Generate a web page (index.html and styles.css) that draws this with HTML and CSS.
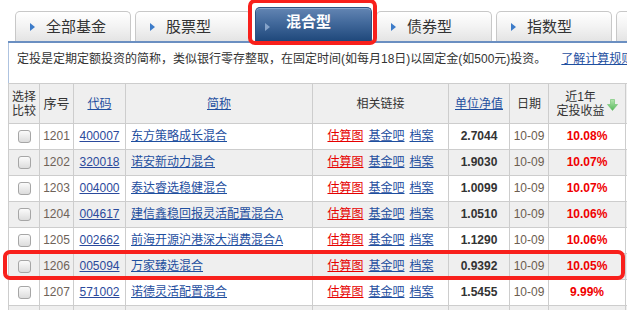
FILE: index.html
```html
<!DOCTYPE html>
<html lang="zh-CN">
<head>
<meta charset="utf-8">
<title>定投排行 - 混合型</title>
<link rel="stylesheet" href="styles.css">
</head>
<body>
<div class="tabs">
  <div class="tab"><i class="tri"></i><span>全部基金</span></div>
  <div class="tab"><i class="tri"></i><span>股票型</span></div>
  <div class="tab active"><i class="tri"></i><span>混合型</span><b class="mark mark-tab"></b></div>
  <div class="tab"><i class="tri"></i><span>债券型</span></div>
  <div class="tab"><i class="tri"></i><span>指数型</span></div>
  <div class="tab"><i class="tri"></i><span>QDII</span></div>
</div>
<div class="panel">
  <p class="intro">定投是定期定额投资的简称，类似银行零存整取，在固定时间(如每月18日)以固定金(如500元)投资。<a class="rule" href="#">了解计算规则</a></p>
  <div class="grid">
    <div class="row head">
      <div class="cell two">选择<br>比较</div>
      <div class="cell big">序号</div>
      <div class="cell"><a class="hl" href="#">代码</a></div>
      <div class="cell"><a class="hl" href="#">简称</a></div>
      <div class="cell">相关链接</div>
      <div class="cell"><a class="hl" href="#">单位净值</a></div>
      <div class="cell">日期</div>
      <div class="cell"><span class="two">近1年<br>定投收益</span><svg class="arrow" width="11" height="12" viewBox="0 0 11 12"><defs><linearGradient id="g" x1="0" y1="0" x2="0" y2="1"><stop offset="0" stop-color="#b5e6b0"/><stop offset="1" stop-color="#56b85a"/></linearGradient></defs><path d="M3.5 0.5h4v5h3l-5 6-5-6h3z" fill="url(#g)" stroke="#6cc26c" stroke-width="0.6"/></svg></div>
      <div class="cell"></div>
    </div>
    <div class="row">
      <div class="cell"><input class="chk" type="checkbox"></div>
      <div class="cell seq">1201</div>
      <div class="cell"><a class="code" href="#">400007</a></div>
      <div class="cell name"><a href="#">东方策略成长混合</a></div>
      <div class="cell links"><a class="red" href="#">估算图</a><a href="#">基金吧</a><a href="#">档案</a></div>
      <div class="cell nav">2.7044</div>
      <div class="cell date">10-09</div>
      <div class="cell pct">10.08%</div>
      <div class="cell"></div>
    </div>
    <div class="row">
      <div class="cell"><input class="chk" type="checkbox"></div>
      <div class="cell seq">1202</div>
      <div class="cell"><a class="code" href="#">320018</a></div>
      <div class="cell name"><a href="#">诺安新动力混合</a></div>
      <div class="cell links"><a class="red" href="#">估算图</a><a href="#">基金吧</a><a href="#">档案</a></div>
      <div class="cell nav">1.9030</div>
      <div class="cell date">10-09</div>
      <div class="cell pct">10.07%</div>
      <div class="cell"></div>
    </div>
    <div class="row">
      <div class="cell"><input class="chk" type="checkbox"></div>
      <div class="cell seq">1203</div>
      <div class="cell"><a class="code" href="#">004000</a></div>
      <div class="cell name"><a href="#">泰达睿选稳健混合</a></div>
      <div class="cell links"><a class="red" href="#">估算图</a><a href="#">基金吧</a><a href="#">档案</a></div>
      <div class="cell nav">1.0099</div>
      <div class="cell date">10-09</div>
      <div class="cell pct">10.07%</div>
      <div class="cell"></div>
    </div>
    <div class="row">
      <div class="cell"><input class="chk" type="checkbox"></div>
      <div class="cell seq">1204</div>
      <div class="cell"><a class="code" href="#">004617</a></div>
      <div class="cell name"><a href="#">建信鑫稳回报灵活配置混合A</a></div>
      <div class="cell links"><a class="red" href="#">估算图</a><a href="#">基金吧</a><a href="#">档案</a></div>
      <div class="cell nav">1.0510</div>
      <div class="cell date">10-09</div>
      <div class="cell pct">10.06%</div>
      <div class="cell"></div>
    </div>
    <div class="row">
      <div class="cell"><input class="chk" type="checkbox"></div>
      <div class="cell seq">1205</div>
      <div class="cell"><a class="code" href="#">002662</a></div>
      <div class="cell name"><a href="#">前海开源沪港深大消费混合A</a></div>
      <div class="cell links"><a class="red" href="#">估算图</a><a href="#">基金吧</a><a href="#">档案</a></div>
      <div class="cell nav">1.1290</div>
      <div class="cell date">10-09</div>
      <div class="cell pct">10.06%</div>
      <div class="cell"></div>
    </div>
    <div class="row">
      <div class="cell markhost"><input class="chk" type="checkbox"><b class="mark mark-row"></b></div>
      <div class="cell seq">1206</div>
      <div class="cell"><a class="code" href="#">005094</a></div>
      <div class="cell name"><a href="#">万家臻选混合</a></div>
      <div class="cell links"><a class="red" href="#">估算图</a><a href="#">基金吧</a><a href="#">档案</a></div>
      <div class="cell nav">0.9392</div>
      <div class="cell date">10-09</div>
      <div class="cell pct">10.05%</div>
      <div class="cell"></div>
    </div>
    <div class="row">
      <div class="cell"><input class="chk" type="checkbox"></div>
      <div class="cell seq">1207</div>
      <div class="cell"><a class="code" href="#">571002</a></div>
      <div class="cell name"><a href="#">诺德灵活配置混合</a></div>
      <div class="cell links"><a class="red" href="#">估算图</a><a href="#">基金吧</a><a href="#">档案</a></div>
      <div class="cell nav">1.5455</div>
      <div class="cell date">10-09</div>
      <div class="cell pct">9.99%</div>
      <div class="cell"></div>
    </div>
    <div class="row">
      <div class="cell"></div>
      <div class="cell"></div>
      <div class="cell"></div>
      <div class="cell"></div>
      <div class="cell"></div>
      <div class="cell"></div>
      <div class="cell"></div>
      <div class="cell"></div>
      <div class="cell"></div>
    </div>
  </div>
</div>
</body>
</html>
```

FILE: styles.css
```css
html, body {
  margin: 0;
  overflow: hidden;
  background: #fff;
}
body {
  font-family: "Liberation Sans", Arial, "Noto Sans CJK SC", sans-serif;
  font-size: 12px;
  line-height: 1.2;
  color: #333;
}
a { color: #1f4f9f; text-decoration: underline; }

/* ---- tabs ---- */
.tabs {
  display: flex;
  align-items: flex-end;
  gap: 4px;
  height: 41px;
  padding-left: 15px;
}
.tab {
  flex: none;
  position: relative;
  box-sizing: border-box;
  width: 116px;
  height: 30px;
  display: flex;
  align-items: center;
  padding-left: 14px;
  border: 1px solid #c8c8c8;
  border-bottom: 0;
  border-radius: 5px 5px 0 0;
  background: linear-gradient(#ffffff, #f3f3f3 50%, #e4e4e4);
  font-size: 15px;
  color: #333;
  white-space: nowrap;
}
.tri {
  flex: none;
  width: 0;
  height: 0;
  border-left: 5px solid #3d7cc9;
  border-top: 4px solid transparent;
  border-bottom: 4px solid transparent;
  margin-right: 11px;
}
.tab.active {
  width: 117px;
  height: 34px;
  padding-left: 9px;
  border-color: #2d5282;
  background: linear-gradient(#6385b3, #42699b 45%, #1f487b);
  box-shadow: inset 0 1px 0 #8aa7cc;
  color: #fff;
  font-weight: bold;
}
.tab.active .tri {
  border-left-color: #86a3c9;
  margin-right: 16px;
  margin-top: 4px;
}
.tab.active span { margin-bottom: 5px; }

/* red highlight frames drawn over content */
.mark {
  position: absolute;
  box-sizing: border-box;
  border: 4px solid #f8201c;
  border-radius: 7px;
  pointer-events: none;
  z-index: 3;
}
.mark-tab {
  left: -8px;
  top: -9px;
  width: 129px;
  height: 46px;
}
.markhost { position: relative; }
.mark-row {
  left: -6px;
  top: -4px;
  width: 622px;
  height: 30px;
}

/* ---- panel ---- */
.panel {
  margin-left: 8px;
  border-top: 2px solid #6b8fc1;
}
.intro {
  margin: 0;
  box-sizing: border-box;
  height: 40px;
  padding: 7px 0 0 8px;
  border-left: 1px solid #aec3e0;
  line-height: 18px;
  white-space: nowrap;
  color: #333;
}
.rule { margin-left: 15px; }

/* ---- grid table ---- */
.row {
  display: grid;
  grid-template-columns: 32px 34px 52px 187px 136px 61px 39px 77px 80px;
  height: 26px;
}
.row:nth-child(odd) { background: #efefef; }
.cell {
  box-sizing: border-box;
  display: flex;
  align-items: center;
  justify-content: center;
  border-right: 1px solid #cdcdcd;
  border-bottom: 1px solid #cdcdcd;
  white-space: nowrap;
  overflow: hidden;
}
.cell:first-child { border-left: 1px solid #cdcdcd; }
.markhost { overflow: visible; }

.head { height: 41px; }
.head .cell {
  border-top: 1px solid #cdcdcd;
  font-size: 12px;
  line-height: 14px;
  text-align: center;
  color: #333;
}
.head .big { font-size: 13px; }
.hl { color: #1f4f9f; }
.arrow { margin-left: 2px; margin-top: 2px; }

.chk {
  appearance: none;
  -webkit-appearance: none;
  margin: 0;
  width: 13px;
  height: 13px;
  box-sizing: border-box;
  border: 1px solid #a6a6a6;
  border-radius: 3px;
  background: linear-gradient(#fbfbfb, #dcdcdc);
}
.seq { color: #6e6258; }
.code { color: #2b4a9c; }
.name { justify-content: flex-start; padding-left: 5px; }
.name a { color: #1f4f9f; }
.links { gap: 5px; }
.links a { color: #1f4f9f; }
.links a.red { color: #e60000; }
.nav { font-weight: bold; color: #333; }
.date { color: #6b5d50; }
.pct { color: #f00000; font-weight: bold; }
```
